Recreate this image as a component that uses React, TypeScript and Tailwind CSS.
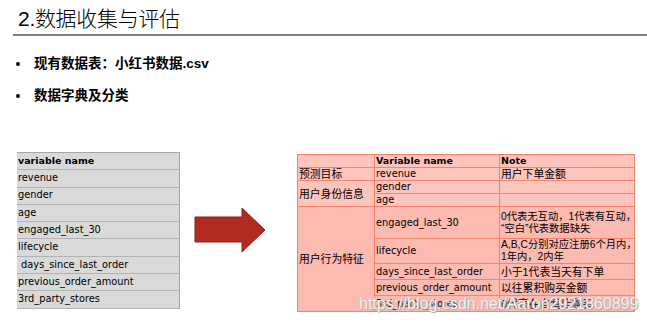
import React from "react";

const leftRows = [
  "revenue",
  "gender",
  "age",
  "engaged_last_30",
  "lifecycle",
  " days_since_last_order",
  "previous_order_amount",
  "3rd_party_stores",
];

const latin = { fontFamily: '"DejaVu Sans", "Noto Sans CJK SC", sans-serif' };
const cjk = { fontFamily: '"Liberation Sans", "Noto Sans CJK SC", sans-serif' };

const App = () => {
  return (
    <div className="relative w-[647px] h-[325px] bg-white overflow-hidden text-black" style={cjk}>
      <div className="ml-[13px] border-b-2 border-[#808080] pl-[5px] pt-[5px] h-[36px]">
        <h1 className="text-[21px] font-light leading-[27px] tracking-[-0.3px]">2.数据收集与评估</h1>
      </div>

      <ul className="mt-[20px] flex flex-col gap-[16px] pl-[16px]">
        <li className="flex items-center h-[16px] text-[13.5px] font-bold">
          <span className="w-[4px] h-[4px] bg-black rounded-full mr-[14px]" />
          现有数据表：小红书数据.csv
        </li>
        <li className="flex items-center h-[16px] text-[13.5px] font-bold">
          <span className="w-[4px] h-[4px] bg-black rounded-full mr-[14px]" />
          数据字典及分类
        </li>
      </ul>

      <div className="flex items-start mt-[48px] pl-[17px]">
        {/* left table */}
        <div className="w-[163px] bg-[#d9d9d9] border-t border-r border-[#a6a6a6]" style={latin}>
          <div className="h-[17.3px] flex items-center border-b border-[#b3b3b3] pl-[1px] text-[9.5px] font-bold">
            variable name
          </div>
          {leftRows.map((r) => (
            <div
              key={r}
              className="h-[17.3px] flex items-center border-b border-[#b3b3b3] pl-[1px] text-[9.8px] whitespace-pre"
            >
              {r}
            </div>
          ))}
        </div>

        {/* arrow */}
        <svg width="74" height="48" viewBox="0 0 74 48" className="mt-[55px] ml-[14px]">
          <polygon
            points="1,10 48,10 48,1 71,23 48,45 48,35 1,35"
            fill="#b22b22"
            stroke="#8f1f18"
            strokeWidth="1"
          />
        </svg>

        {/* right table */}
        <table className="ml-[29px] mt-[2px] w-[337px] table-fixed border-collapse text-[10.8px] leading-[12px] bg-[#fec5bd]">
          <colgroup>
            <col className="w-[77px]" />
            <col className="w-[125px]" />
            <col className="w-[135px]" />
          </colgroup>
          <tbody>
            <tr className="h-[13px]">
              <td className="border border-[#f3826f]" />
              <td className="border border-[#f3826f] pl-[1px] font-bold text-[9.5px]" style={latin}>Variable name</td>
              <td className="border border-[#f3826f] pl-[1px] font-bold text-[9.5px]" style={latin}>Note</td>
            </tr>
            <tr className="h-[13px]">
              <td className="border border-[#f3826f] pl-[1px]">预测目标</td>
              <td className="border border-[#f3826f] pl-[1px] text-[9.8px]" style={latin}>revenue</td>
              <td className="border border-[#f3826f] pl-[1px]">用户下单金额</td>
            </tr>
            <tr className="h-[13px]">
              <td rowSpan={2} className="border border-[#f3826f] pl-[1px]">用户身份信息</td>
              <td className="border border-[#f3826f] pl-[1px] text-[9.8px]" style={latin}>gender</td>
              <td className="border border-[#f3826f]" />
            </tr>
            <tr className="h-[13px]">
              <td className="border border-[#f3826f] pl-[1px] text-[9.8px]" style={latin}>age</td>
              <td className="border border-[#f3826f]" />
            </tr>
            <tr className="h-[32px] bg-[#fdbab0]">
              <td rowSpan={5} className="border border-[#f3826f] pl-[1px]">用户行为特征</td>
              <td className="border border-[#f3826f] pl-[1px] text-[9.8px]" style={latin}>engaged_last_30</td>
              <td className="border border-[#f3826f] pl-[1px] whitespace-nowrap text-[10.3px]">
                0代表无互动，1代表有互动，
                <br />
                “空白”代表数据缺失
              </td>
            </tr>
            <tr className="h-[24px] bg-[#fdbab0]">
              <td className="border border-[#f3826f] pl-[1px] text-[9.8px]" style={latin}>lifecycle</td>
              <td className="border border-[#f3826f] pl-[1px] whitespace-nowrap text-[10.3px]">
                A,B,C分别对应注册6个月内，
                <br />
                1年内，2内年
              </td>
            </tr>
            <tr className="h-[16px] bg-[#fdbab0]">
              <td className="border border-[#f3826f] pl-[1px] text-[9.8px]" style={latin}>days_since_last_order</td>
              <td className="border border-[#f3826f] pl-[1px]">小于1代表当天有下单</td>
            </tr>
            <tr className="h-[16px] bg-[#fdbab0]">
              <td className="border border-[#f3826f] pl-[1px] text-[9.8px]" style={latin}>previous_order_amount</td>
              <td className="border border-[#f3826f] pl-[1px]">以往累积购买金额</td>
            </tr>
            <tr className="h-[16px] bg-[#fdbab0]">
              <td className="border border-[#f3826f] pl-[1px] text-[9.8px]" style={latin}>3rd_party_stores</td>
              <td className="border border-[#f3826f] pl-[1px]">0代表在自营店购买</td>
            </tr>
          </tbody>
        </table>
      </div>

      {/* watermark */}
      <div
        className="absolute left-[359px] top-[294px] text-[16px] leading-[20px] text-[#f4f4f4]"
        style={{ fontFamily: '"Liberation Sans", sans-serif', textShadow: "0 0 1px #9a9a9a, 1px 1px 1px #b0b0b0" }}
      >
        https://blog.csdn.net/Aaron2921860899
      </div>
    </div>
  );
};

export default App;
